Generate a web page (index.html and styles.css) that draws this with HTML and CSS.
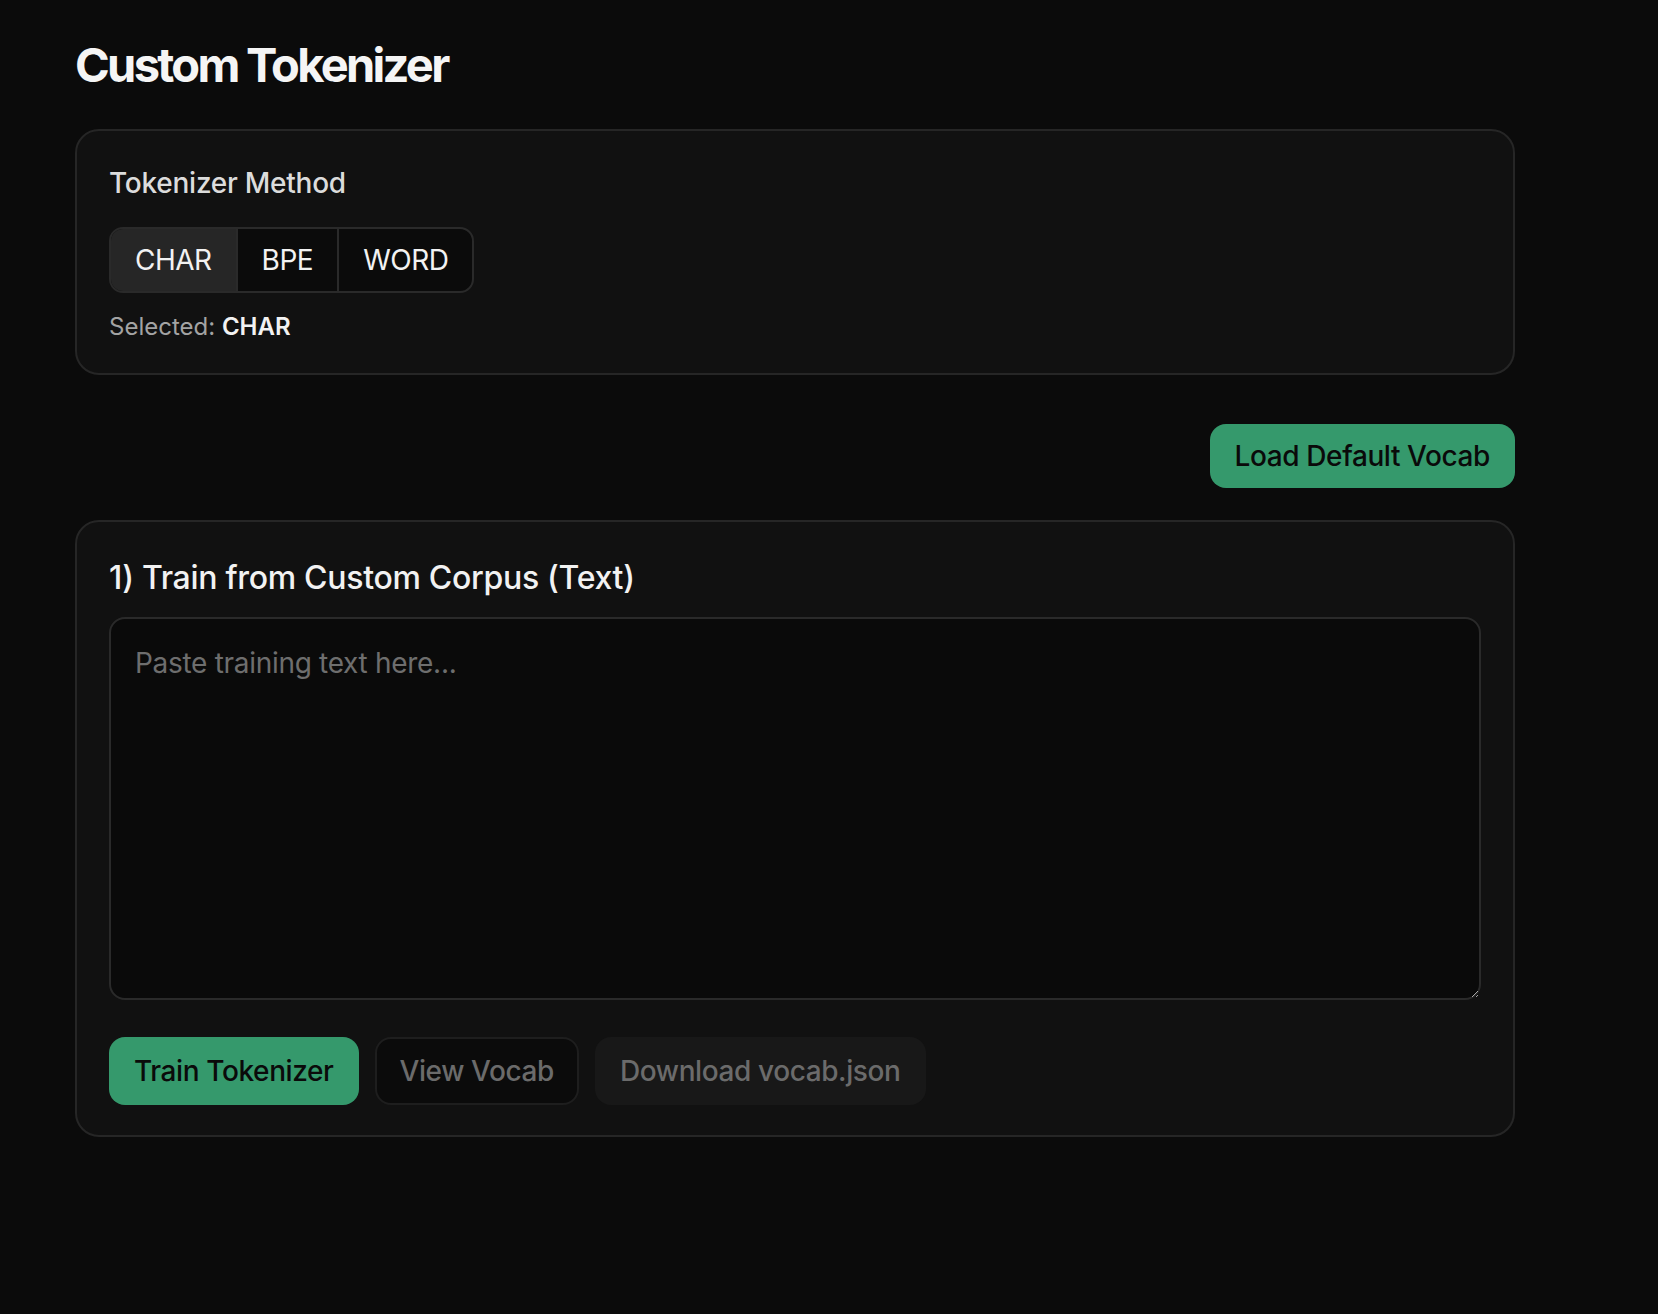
FILE: index.html
```html
<!DOCTYPE html>
<html lang="en">
<head>
<meta charset="utf-8">
<title>Custom Tokenizer</title>
<link rel="stylesheet" href="styles.css">
</head>
<body>
<main class="page">
  <h1 class="title">Custom Tokenizer</h1>

  <section class="card method-card">
    <div class="label">Tokenizer Method</div>
    <div class="segmented">
      <button class="seg seg-active">CHAR</button>
      <button class="seg">BPE</button>
      <button class="seg">WORD</button>
    </div>
    <div class="selected">Selected: <strong>CHAR</strong></div>
  </section>

  <div class="toolbar">
    <button class="btn btn-green">Load Default Vocab</button>
  </div>

  <section class="card train-card">
    <h2 class="heading">1) Train from Custom Corpus (Text)</h2>
    <textarea class="corpus" placeholder="Paste training text here..."></textarea>
    <div class="actions">
      <button class="btn btn-green">Train Tokenizer</button>
      <button class="btn btn-outline">View Vocab</button>
      <button class="btn btn-muted">Download vocab.json</button>
    </div>
  </section>
</main>
</body>
</html>
```

FILE: styles.css
```css
* { box-sizing: border-box; }

html, body {
  margin: 0;
  background: #0b0b0b;
  color: #f2f2f2;
  font-family: Inter, "Noto Sans", "Liberation Sans", sans-serif;
}

.page {
  width: 1515px;
  padding: 33px 0 0 75px;
}

.title {
  margin: 0 0 32px;
  font-size: 47px;
  line-height: 64px;
  font-weight: 700;
  letter-spacing: -2.7px;
  color: #f5f5f5;
}

.card {
  background: #111111;
  border: 2px solid #262626;
  border-radius: 24px;
  padding: 32px 32px 30px;
}

.label {
  font-size: 28px;
  line-height: 40px;
  font-weight: 500;
  letter-spacing: -0.25px;
  color: #dcdcdc;
  margin-bottom: 24px;
}

.segmented {
  display: inline-flex;
  border: 2px solid #2a2a2a;
  border-radius: 14px;
  overflow: hidden;
  background: #0b0b0b;
}

.seg {
  font-family: inherit;
  font-size: 28px;
  line-height: 40px;
  font-weight: 400;
  letter-spacing: -0.5px;
  color: #f2f2f2;
  background: transparent;
  border: 0;
  padding: 11px 24px;
}

.seg + .seg { border-left: 2px solid #2a2a2a; }

.seg-active { background: #262626; }

.selected {
  margin-top: 18px;
  font-size: 24px;
  line-height: 32px;
  color: #a3a3a3;
}

.selected strong {
  color: #f2f2f2;
  font-weight: 600;
}

.toolbar {
  display: flex;
  justify-content: flex-end;
  margin: 49px 0 32px;
}

.btn {
  font-family: inherit;
  font-size: 28px;
  line-height: 40px;
  font-weight: 500;
  letter-spacing: -0.4px;
  border-radius: 16px;
  border: 2px solid transparent;
  padding: 10px 23px;
  cursor: pointer;
}

.btn-green {
  background: #35996c;
  color: #0a0a0a;
}

.btn-outline {
  background: #0b0b0b;
  border-color: #1e1e1e;
  color: #6b6b6b;
}

.btn-muted {
  background: #181818;
  color: #6b6b6b;
}

.heading {
  margin: 0 0 15px;
  font-size: 32px;
  line-height: 48px;
  font-weight: 500;
  letter-spacing: -0.3px;
  color: #f2f2f2;
}

.corpus {
  display: block;
  width: 100%;
  height: 383px;
  margin: 0 0 37px;
  padding: 24px;
  font-family: inherit;
  font-size: 28px;
  line-height: 40px;
  letter-spacing: -0.3px;
  color: #f2f2f2;
  background: #0a0a0a;
  border: 2px solid #2a2a2a;
  border-radius: 16px;
  outline: none;
}

.corpus::placeholder { color: #6e6e6e; }

.actions {
  display: flex;
  gap: 16px;
}

.actions .btn { padding: 12px 23px; }
```
